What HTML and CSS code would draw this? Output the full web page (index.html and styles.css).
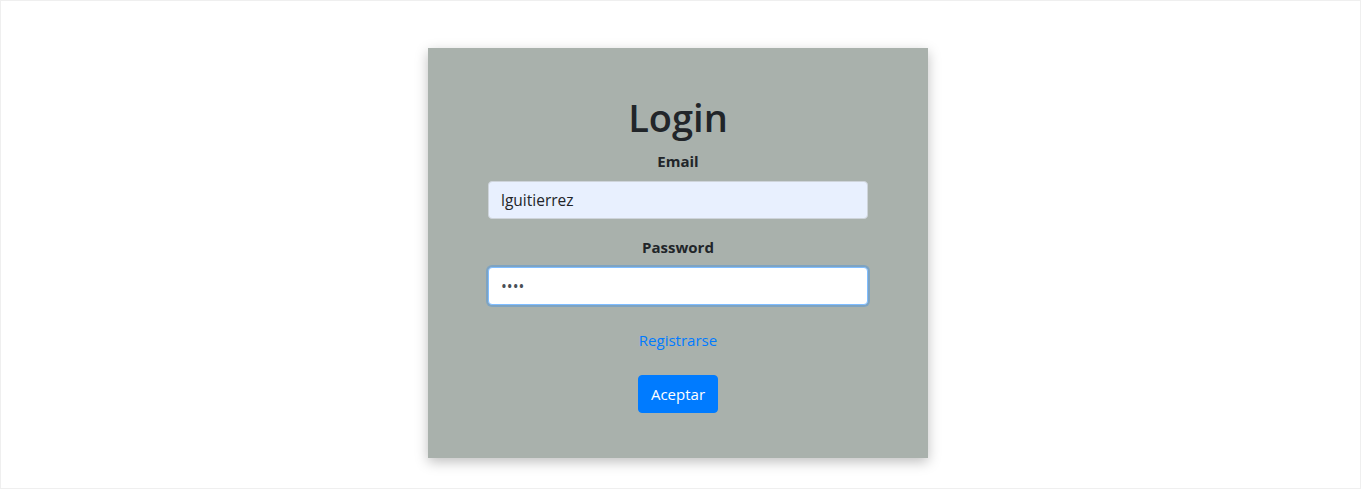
FILE: index.html
```html
<!DOCTYPE html>
<html lang="es">
<head>
<meta charset="utf-8">
<title>Login</title>
<link rel="stylesheet" href="styles.css">
</head>
<body>
<div class="frame">
  <form class="card">
    <h1 class="title">Login</h1>
    <div class="group">
      <label class="label" for="email">Email</label>
      <input class="control autofill" id="email" type="text" value="lguitierrez">
    </div>
    <div class="group">
      <label class="label" for="pass">Password</label>
      <input class="control focus" id="pass" type="password" value="1234">
    </div>
    <a class="link" href="#">Registrarse</a>
    <button class="btn" type="button">Aceptar</button>
  </form>
</div>
</body>
</html>
```
FILE: styles.css
```css
html, body {
  margin: 0;
  padding: 0;
  height: 100%;
  background: #fff;
}
body {
  font-family: "Open Sans", "Noto Sans", "Liberation Sans", sans-serif;
  color: #212529;
}
.frame {
  box-sizing: border-box;
  height: 489px;
  border: 1px solid #efefef;
  display: flex;
  justify-content: center;
  padding: 47px 5px 0 0;
}
.card {
  box-sizing: border-box;
  width: 500px;
  height: 410px;
  background: #a9b1ac;
  box-shadow: 0 4px 12px rgba(0, 0, 0, 0.25);
  padding: 45px 60px 0;
  display: flex;
  flex-direction: column;
  align-items: center;
}
.title {
  margin: 0 0 8px;
  font-size: 38px;
  font-weight: 600;
  line-height: 48px;
}
.group {
  width: 100%;
  display: flex;
  flex-direction: column;
  align-items: center;
  margin-bottom: 16px;
}
.label {
  font-size: 15px;
  font-weight: 700;
  line-height: 24px;
  margin-bottom: 8px;
}
.control {
  box-sizing: border-box;
  width: 100%;
  height: 38px;
  padding: 6px 12px;
  font-family: inherit;
  font-size: 15.5px;
  color: #212529;
  border: 1px solid #ced4da;
  border-radius: 4px;
  background: #fff;
  outline: none;
}
.autofill {
  background: #e8f0fe;
}
.focus {
  border-color: #80bdff;
  box-shadow: 0 0 0 2px rgba(0, 123, 255, 0.25);
  color: #495057;
}
.link {
  margin-top: 7px;
  font-size: 15px;
  line-height: 24px;
  color: #007bff;
  text-decoration: none;
}
.btn {
  margin-top: 23px;
  height: 38px;
  width: 80px;
  padding: 0;
  font-family: inherit;
  font-size: 15px;
  color: #fff;
  background: #007bff;
  border: 1px solid #007bff;
  border-radius: 4px;
}
```
